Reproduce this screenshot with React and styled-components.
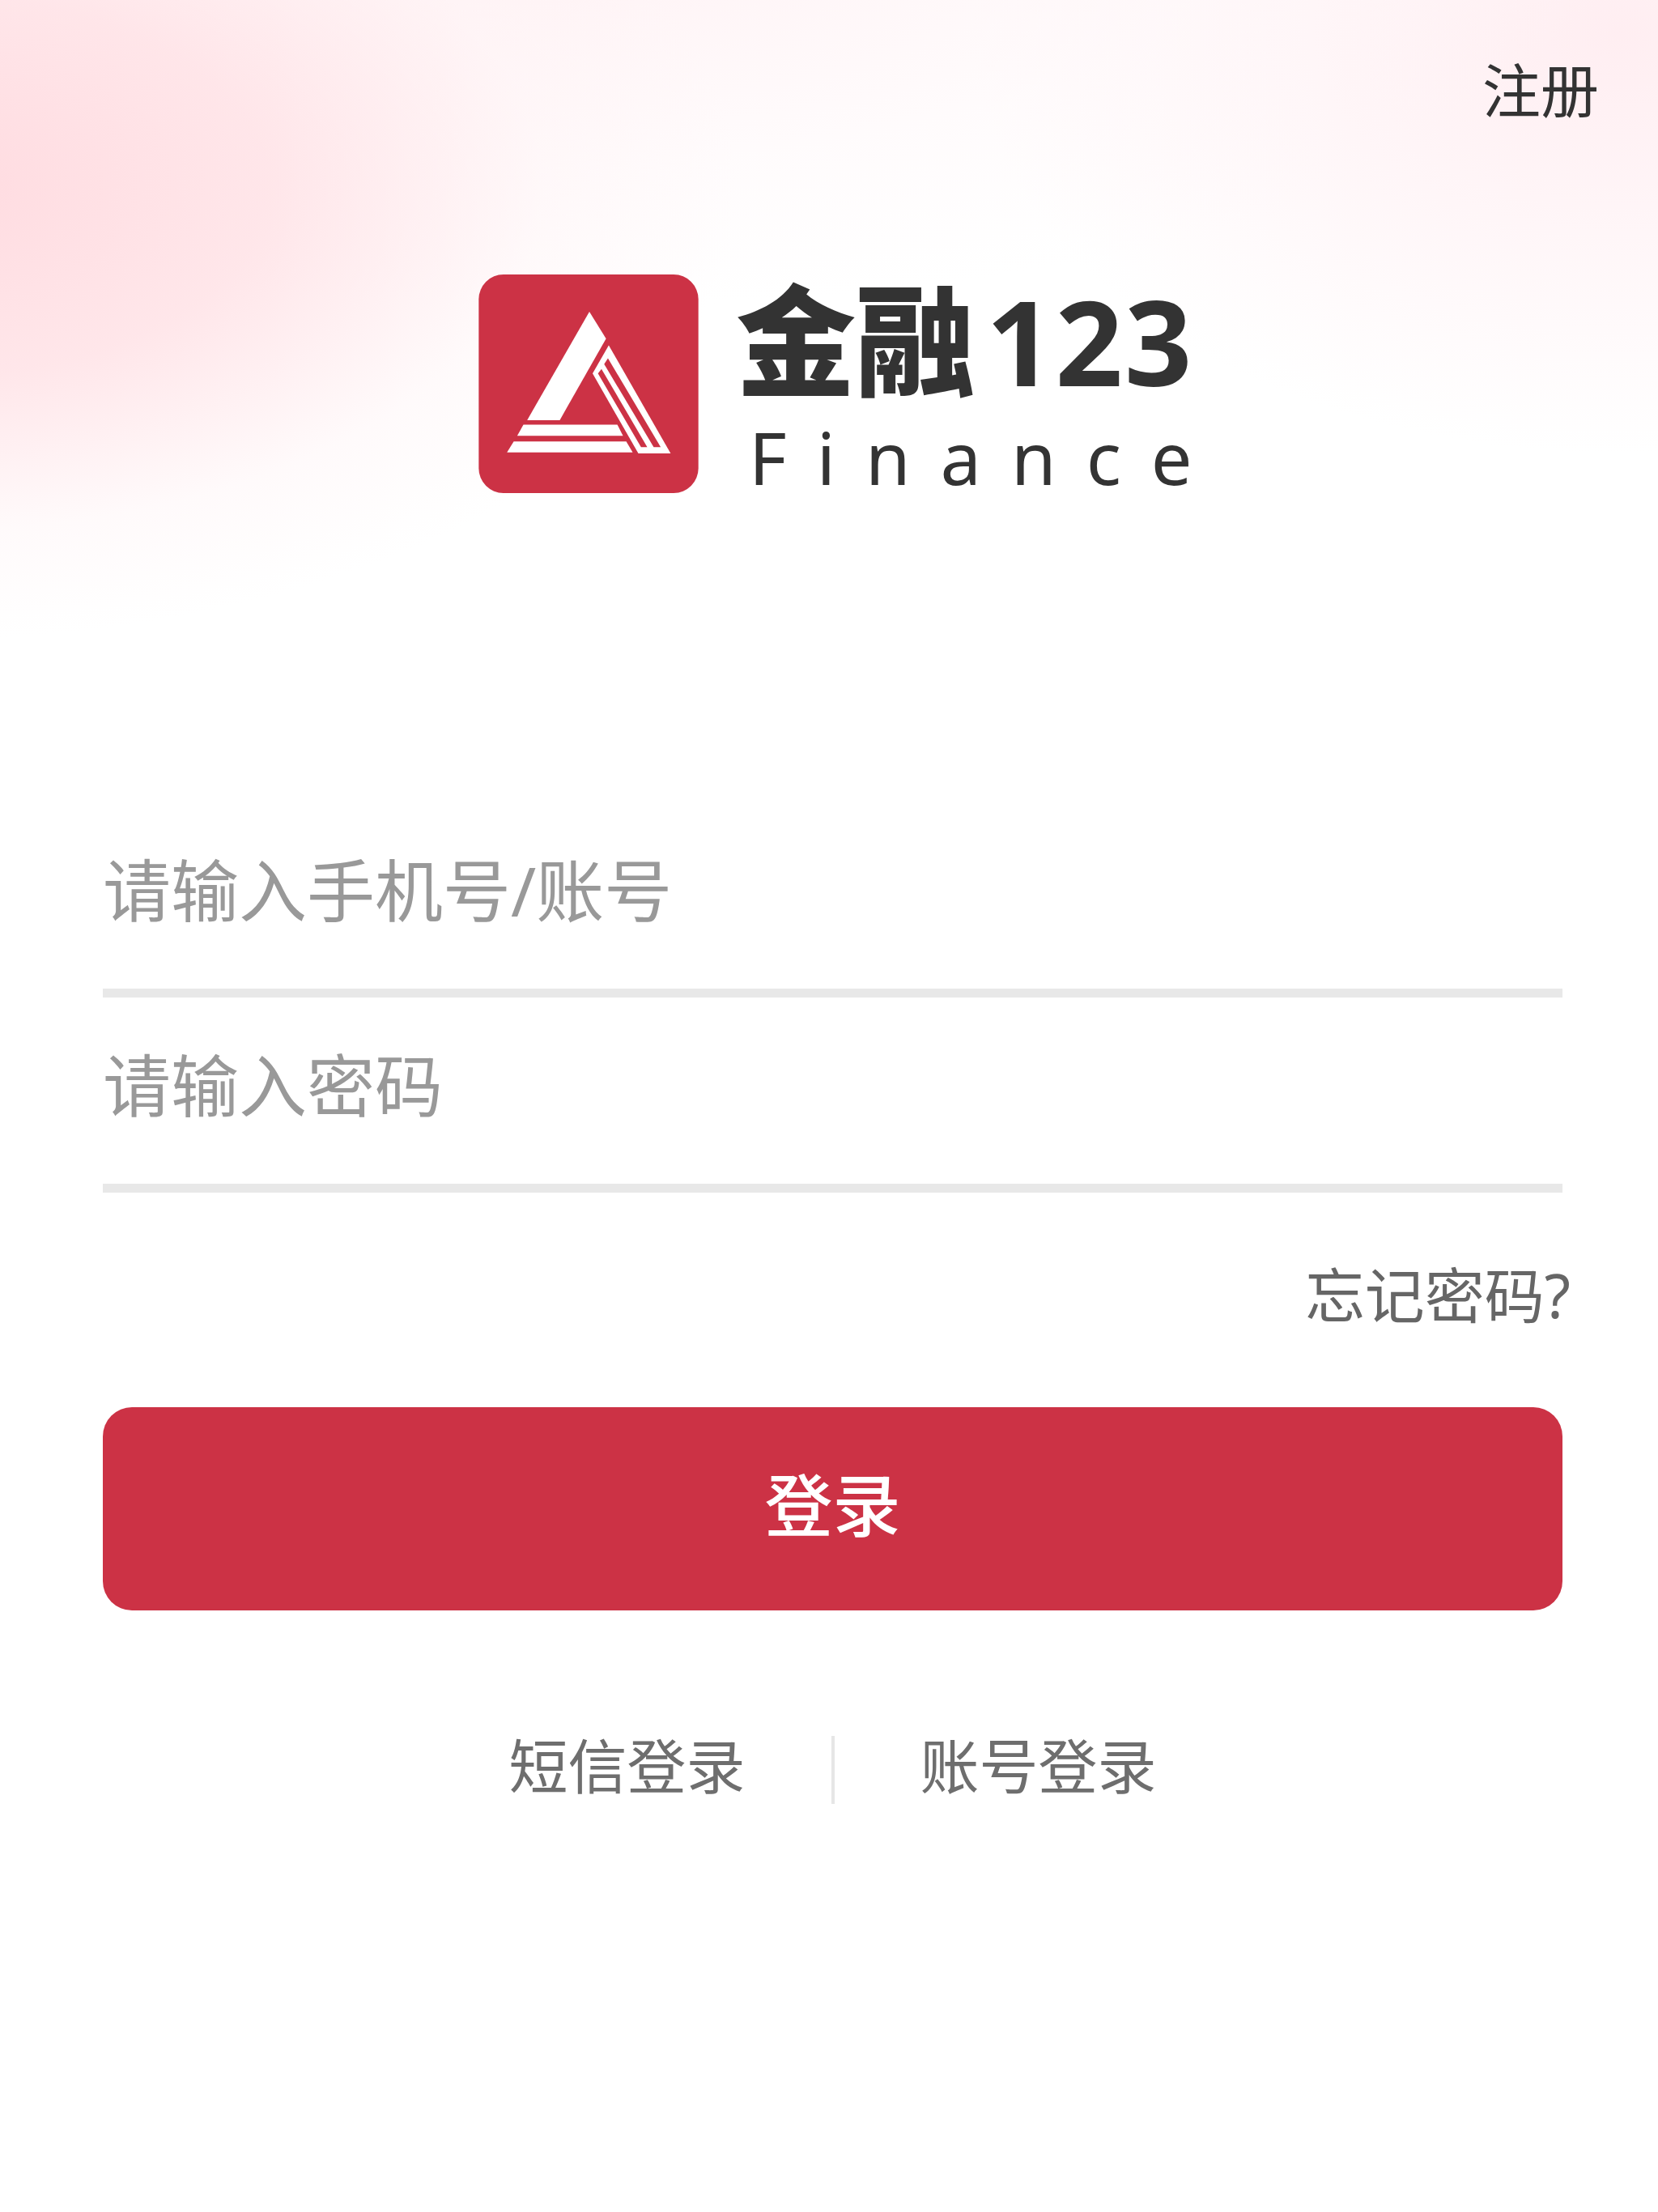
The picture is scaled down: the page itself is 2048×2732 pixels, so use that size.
import React from 'react'
import styled, { createGlobalStyle } from 'styled-components'

const GlobalStyle = createGlobalStyle`
  html, body {
    margin: 0;
    padding: 0;
    background: #fff;
  }
  * {
    box-sizing: border-box;
  }
`

const CJK = `"Noto Sans", "Noto Sans CJK SC", sans-serif`
const BRAND_RED = '#cc3245'

const Logo = () => (
  <LogoIcon viewBox="92 87 816 812">
    <rect x="92" y="87" width="816" height="812" rx="92" fill={BRAND_RED} />
    <g fill="#fff">
      <polygon points="503,225 565,325 393,628 272,628" />
      <polygon points="258,645 607,645 628,686 235,686" />
      <polygon points="222,707 640,707 664,748 197,748" />
      <polygon points="575,350 805,752 685,752 515,455" />
    </g>
    <g fill={BRAND_RED}>
      <polygon points="572,398 768,728 742,728 558,420" />
      <polygon points="548,438 718,728 695,728 535,455" />
    </g>
  </LogoIcon>
)

const App = () => {
  return (
    <Page>
      <GlobalStyle />
      <TopBar>
        <RegisterLink>注册</RegisterLink>
      </TopBar>

      <Brand>
        <Logo />
        <BrandText>
          <BrandName>
            金融<BrandDigits>123</BrandDigits>
          </BrandName>
          <BrandSub>Finance</BrandSub>
        </BrandText>
      </Brand>

      <Form>
        <Field>请输入手机号/账号</Field>
        <Field>请输入密码</Field>
        <ForgotRow>忘记密码?</ForgotRow>
        <LoginButton>
          <ButtonLabel>登录</ButtonLabel>
        </LoginButton>
        <Switcher>
          <SwitchItem>短信登录</SwitchItem>
          <SwitchDivider />
          <SwitchItem>账号登录</SwitchItem>
        </Switcher>
      </Form>
    </Page>
  )
}

export default App

const Page = styled.div`
  width: 2048px;
  height: 2732px;
  overflow: hidden;
  font-family: ${CJK};
  background:
    radial-gradient(ellipse 1000px 560px at -90px 230px, #ffdbe0 0%, rgba(255, 226, 230, 0.85) 42%, rgba(255, 241, 243, 0.35) 76%, rgba(255, 255, 255, 0) 100%),
    radial-gradient(ellipse 1300px 440px at 700px -60px, rgba(255, 238, 241, 0.7) 0%, rgba(255, 246, 248, 0.4) 60%, rgba(255, 255, 255, 0) 100%),
    radial-gradient(ellipse 800px 520px at 2000px 40px, rgba(255, 236, 240, 0.9) 0%, rgba(255, 255, 255, 0) 100%),
    #fff;
`

const TopBar = styled.div`
  display: flex;
  justify-content: flex-end;
  height: 339px;
  padding: 59px 73px 0 0;
`

const RegisterLink = styled.div`
  font-size: 72px;
  line-height: 104px;
  color: #333;
`

const Brand = styled.div`
  display: flex;
  align-items: flex-start;
  gap: 46px;
  height: 270px;
  padding-left: 591px;
`

const LogoIcon = styled.svg`
  width: 272px;
  height: 270px;
  flex-shrink: 0;
`

const BrandText = styled.div`
  display: flex;
  flex-direction: column;
`

const BrandName = styled.div`
  display: flex;
  align-items: baseline;
  font-size: 148px;
  font-weight: 900;
  line-height: 146px;
  color: #333;
  margin-top: 8px;
  white-space: nowrap;
`

const BrandDigits = styled.span`
  font-family: "Noto Sans", sans-serif;
  font-size: 146px;
  font-weight: 700;
  margin-left: 13px;
  letter-spacing: 2px;
`

const BrandSub = styled.div`
  font-family: "Noto Sans", sans-serif;
  font-size: 90px;
  font-weight: 400;
  line-height: 110px;
  letter-spacing: 37px;
  color: #333;
  margin-left: 16px;
  margin-top: 15px;
`

const Form = styled.div`
  display: flex;
  flex-direction: column;
  padding: 382px 118px 0 127px;
`

const Field = styled.div`
  height: 241px;
  border-bottom: 11px solid #e8e8e8;
  font-size: 84px;
  line-height: 120px;
  color: #999;
  padding-top: 49px;
`

const ForgotRow = styled.div`
  margin: 75px -10px 0 0;
  text-align: right;
  font-size: 74px;
  line-height: 104px;
  color: #666;
`

const LoginButton = styled.div`
  display: flex;
  align-items: center;
  justify-content: center;
  height: 251px;
  margin-top: 86px;
  border-radius: 36px;
  background: ${BRAND_RED};
`

const ButtonLabel = styled.span`
  color: #fff;
  font-size: 84px;
  font-weight: 500;
  padding-bottom: 18px;
`

const Switcher = styled.div`
  display: flex;
  align-items: center;
  justify-content: center;
  margin-top: 140px;
  gap: 106px;
`

const SwitchItem = styled.div`
  font-size: 73px;
  line-height: 104px;
  color: #6e6e6e;
  margin-bottom: 10px;
`

const SwitchDivider = styled.div`
  width: 4px;
  height: 84px;
  background: #e6e6e6;
`
